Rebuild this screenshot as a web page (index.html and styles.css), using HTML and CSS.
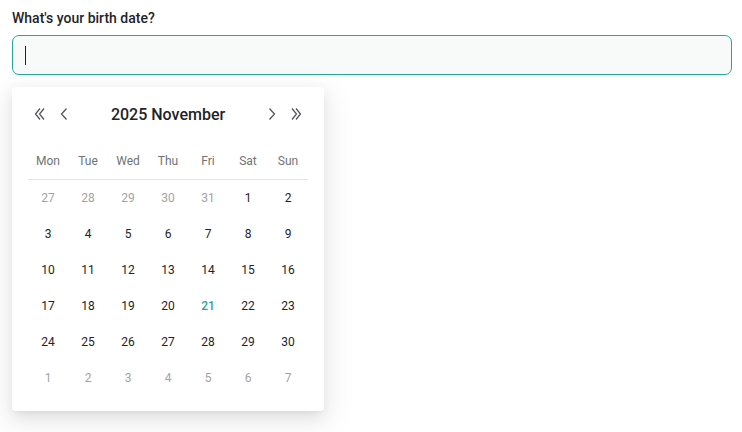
FILE: index.html
```html
<!DOCTYPE html>
<html>
<head>
<meta charset="utf-8">
<link rel="stylesheet" href="styles.css">
</head>
<body>
<div class="field">
  <label class="label">What's your birth date?</label>
  <div class="input"><span class="caret"></span></div>
  <div class="picker">
    <div class="header">
      <button class="nav"><svg width="12" height="14" viewBox="0 0 12 14"><path d="M6 1.5 L1.5 7 L6 12.5 M10 1.5 L5.5 7 L10 12.5" fill="none" stroke="#4b4f56" stroke-width="1.2"/></svg></button>
      <button class="nav"><svg width="8" height="14" viewBox="0 0 8 14"><path d="M6.5 1.5 L1.5 7 L6.5 12.5" fill="none" stroke="#4b4f56" stroke-width="1.2"/></svg></button>
      <div class="title">2025 November</div>
      <button class="nav"><svg width="8" height="14" viewBox="0 0 8 14"><path d="M1.5 1.5 L6.5 7 L1.5 12.5" fill="none" stroke="#4b4f56" stroke-width="1.2"/></svg></button>
      <button class="nav"><svg width="12" height="14" viewBox="0 0 12 14"><path d="M2 1.5 L6.5 7 L2 12.5 M6 1.5 L10.5 7 L6 12.5" fill="none" stroke="#4b4f56" stroke-width="1.2"/></svg></button>
    </div>
    <div class="weekdays">
      <span>Mon</span><span>Tue</span><span>Wed</span><span>Thu</span><span>Fri</span><span>Sat</span><span>Sun</span>
    </div>
    <div class="days">
      <span class="muted">27</span><span class="muted">28</span><span class="muted">29</span><span class="muted">30</span><span class="muted">31</span><span>1</span><span>2</span>
      <span>3</span><span>4</span><span>5</span><span>6</span><span>7</span><span>8</span><span>9</span>
      <span>10</span><span>11</span><span>12</span><span>13</span><span>14</span><span>15</span><span>16</span>
      <span>17</span><span>18</span><span>19</span><span>20</span><span class="today">21</span><span>22</span><span>23</span>
      <span>24</span><span>25</span><span>26</span><span>27</span><span>28</span><span>29</span><span>30</span>
      <span class="muted">1</span><span class="muted">2</span><span class="muted">3</span><span class="muted">4</span><span class="muted">5</span><span class="muted">6</span><span class="muted">7</span>
    </div>
  </div>
</div>
</body>
</html>
```
FILE: styles.css
```css
html, body {
  margin: 0;
  padding: 0;
  background: #ffffff;
  font-family: Roboto, "Noto Sans", sans-serif;
  color: #1f2328;
}
html {
  min-height: 100%;
}
body {
  min-height: 432px;
}
.field {
  padding: 8px 10px 0 12px;
  display: flex;
  flex-direction: column;
  align-items: stretch;
}
.label {
  font-size: 14px;
  font-weight: 500;
  line-height: 20px;
  color: #1f2328;
}
.input {
  margin-top: 7px;
  height: 38px;
  border: 1px solid #26a69a;
  border-radius: 7px;
  background: #f8f9f9;
  display: flex;
  align-items: center;
  padding-left: 12px;
}
.caret {
  width: 1px;
  height: 19px;
  background: #1f2328;
}
.picker {
  margin-top: 12px;
  width: 280px;
  padding: 12px 16px 15px;
  background: #fff;
  border-radius: 4px;
  box-shadow: 0 6px 16px rgba(0,0,0,0.08), 0 3px 6px -4px rgba(0,0,0,0.12), 0 9px 28px 8px rgba(0,0,0,0.05);
}
.header {
  display: flex;
  align-items: center;
  height: 30px;
}
.nav {
  width: 24px;
  height: 30px;
  padding: 0;
  border: 0;
  background: none;
  display: flex;
  align-items: center;
  justify-content: center;
}
.title {
  flex: 1;
  text-align: center;
  font-size: 16px;
  font-weight: 500;
  color: #1f2328;
}
.weekdays {
  margin-top: 16px;
  display: grid;
  grid-template-columns: repeat(7, 40px);
  padding-bottom: 4px;
  border-bottom: 1px solid #e3e5e8;
}
.weekdays span {
  height: 30px;
  line-height: 32px;
  text-align: center;
  font-size: 12px;
  color: #6f7378;
}
.days {
  display: grid;
  grid-template-columns: repeat(7, 40px);
  grid-auto-rows: 36px;
}
.days span {
  display: flex;
  align-items: center;
  justify-content: center;
  font-size: 12px;
  color: #1f2328;
}
.days span.muted {
  color: #a3a3a3;
}
.days span.today {
  color: #26a69a;
  font-weight: 500;
}
```
